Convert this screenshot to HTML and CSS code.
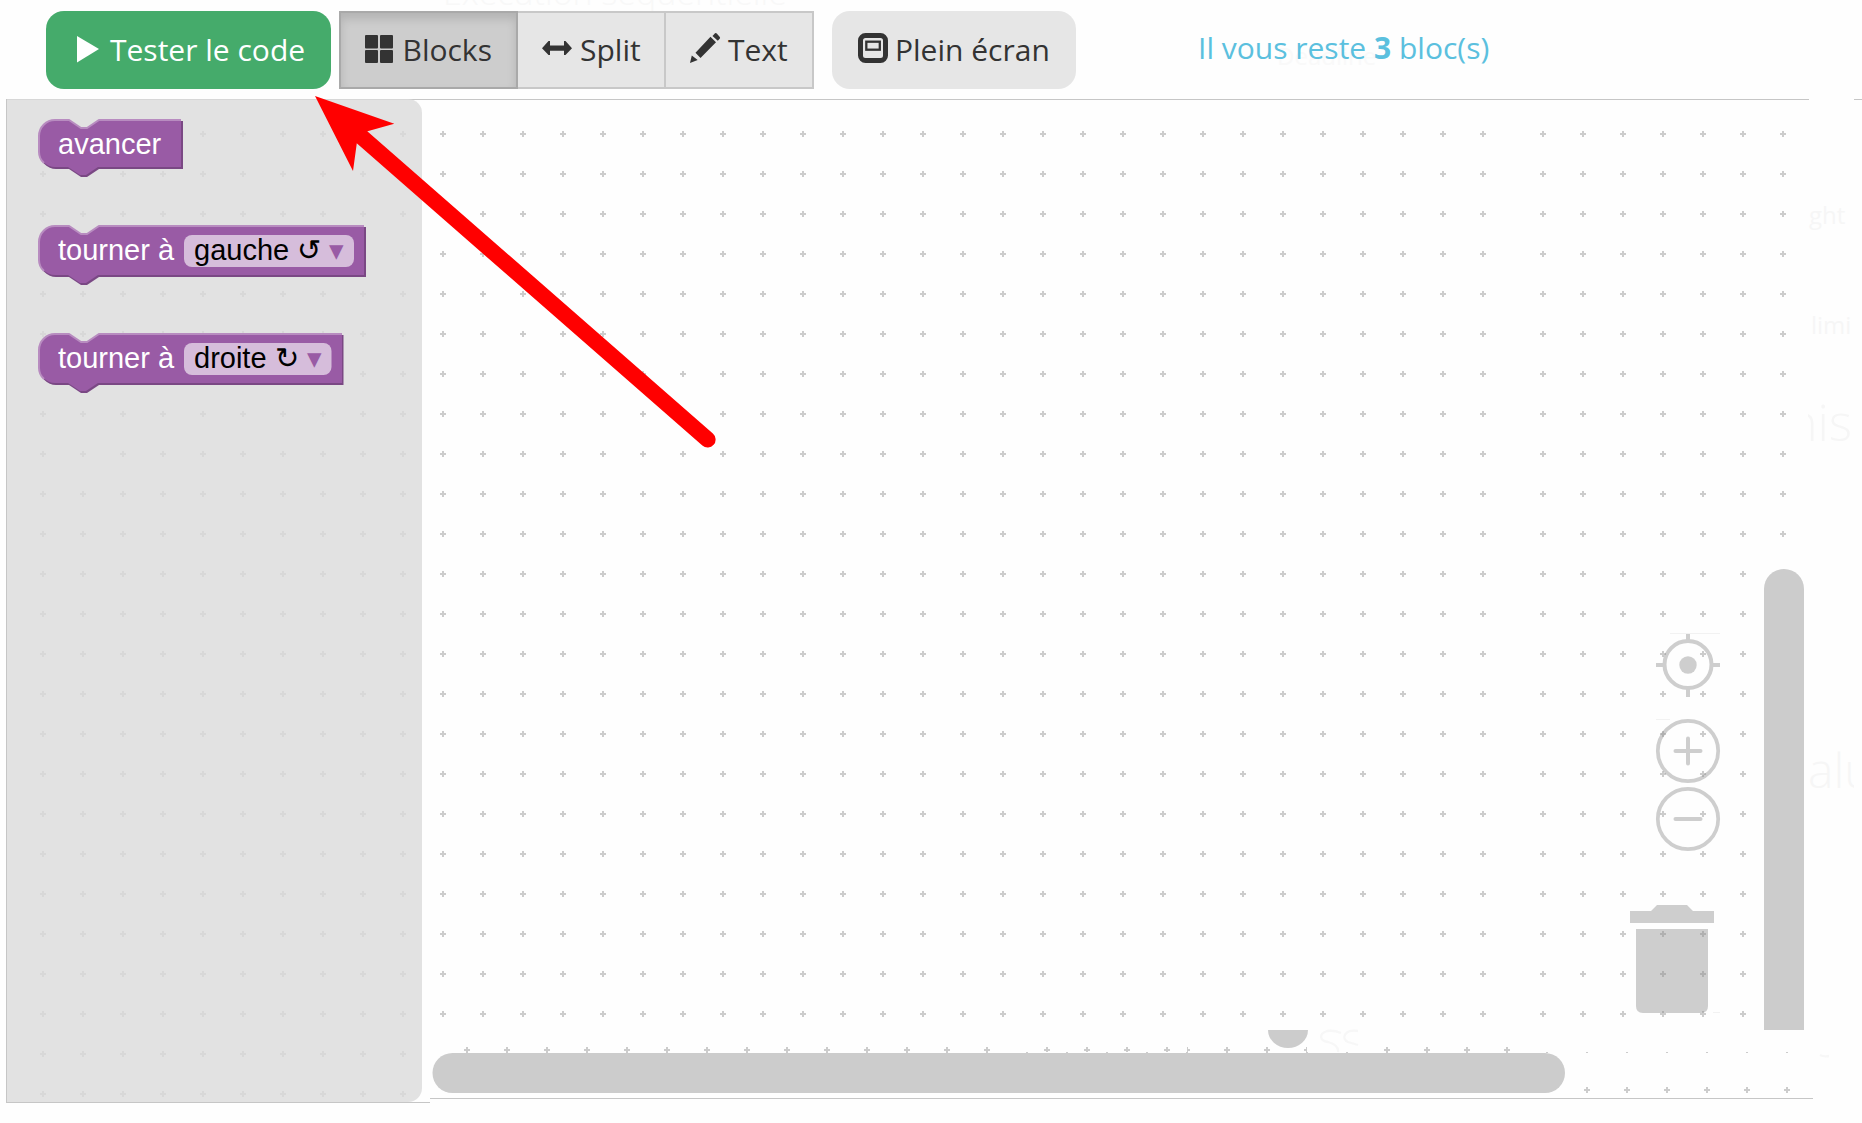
FILE: index.html
```
<!DOCTYPE html>
<html lang="fr">
<head>
<meta charset="utf-8">
<title>Tester le code</title>
<link rel="stylesheet" href="styles.css">
</head>
<body>
<header class="toolbar">
  <span class="ghost ghost-title">Exécution séquentielle</span>
  <span class="ghost ghost-deadline">Deadline</span>
  <button class="btn run"><svg class="ico" width="30" height="30" viewBox="0 0 30 30"><path d="M3 3 25 16 3 29.500Z" fill="#fff"/></svg><span>Tester le code</span></button>
  <div class="modes">
    <button class="mode blocks active"><svg class="ico" width="30" height="30" viewBox="0 0 30 30"><g fill="#333"><rect x="1" y="2" width="13" height="13.400" rx="1"/><rect x="16" y="2" width="13" height="13.400" rx="1"/><rect x="1" y="17" width="13" height="13" rx="1"/><rect x="16" y="17" width="13" height="13" rx="1"/></g></svg><span>Blocks</span></button>
    <button class="mode split"><svg class="ico" width="30" height="30" viewBox="0 0 30 30"><path d="M0 15.300 6.500 8H8V12.500H22V8H23.500L30 15.300 23.500 22H22V17.700H8V22H6.500Z" fill="#333"/></svg><span>Split</span></button>
    <button class="mode text"><svg class="ico" width="30" height="30" viewBox="0 0 30 30"><path d="M0 30 1.800 22.500 7.700 27ZM5.500 19.700 20.500 3.800 26 9.300 10.500 25ZM22.500 3 25 .3Q26 -.3 27 .7L29.800 4Q30.500 5 29.700 5.800L27.800 7.700Z" fill="#333"/></svg><span>Text</span></button>
  </div>
  <button class="btn full"><svg class="ico" width="30" height="30" viewBox="0 0 30 30"><rect x="2.500" y="2.500" width="25" height="25" rx="5" fill="none" stroke="#333" stroke-width="5"/><rect x="8.300" y="8.700" width="13.500" height="8" fill="none" stroke="#333" stroke-width="2.300"/></svg><span>Plein écran</span></button>
  <p class="remaining">Il vous reste <b>3</b> bloc(s)</p>
</header>
<main class="workspace">
<svg class="canvas" width="1862" height="1024" viewBox="0 99 1862 1024">
  <defs>
    <pattern id="grid" x="23" y="114" width="40" height="40" patternUnits="userSpaceOnUse"><path class="cross" d="M17 20H23M20 17V23"/></pattern>
    <pattern id="grid-right" x="1523" y="114" width="40" height="40" patternUnits="userSpaceOnUse"><path class="cross" d="M17 20H23M20 17V23"/></pattern>
    <pattern id="grid-low" x="7" y="1030" width="40" height="40" patternUnits="userSpaceOnUse"><path class="cross" d="M17 20H23M20 17V23"/></pattern>
    <pattern id="ticks" x="7" y="1032" width="40" height="40" patternUnits="userSpaceOnUse"><path d="M19 20H21V21H19Z" fill="#ccc"/></pattern>
    <clipPath id="side"><rect x="1808" y="99" width="46" height="1000"/></clipPath>
  </defs>
  <g class="faint" font-weight="300" clip-path="url(#side)">
    <text x="1809" y="224" font-size="24" font-weight="400">ght</text>
    <text x="1811" y="334" font-size="24" font-weight="400">limi</text>
    <text x="1852" y="441" font-size="50" text-anchor="end">nis</text>
    <text x="1808" y="788" font-size="48">alu</text>
  </g>
  <path d="M1341 1033Q1334 1030 1327 1031C1318 1034 1320 1041 1328 1042Q1339 1045 1338 1052M1358 1031C1344 1029 1341 1039 1348 1042L1358 1045M1820 1055Q1824 1057 1829 1056" fill="none" stroke="#f7f7f7" stroke-width="2.300"/>

  <!-- workspace grid -->
  <rect x="23" y="114" width="1480" height="920" fill="url(#grid)"/>
  <rect x="23" y="1034" width="400" height="68" fill="url(#grid)"/>
  <rect x="1523" y="114" width="280" height="920" fill="url(#grid-right)"/>
  <rect x="447" y="1040" width="560" height="14" fill="url(#grid-low)"/>
  <g transform="translate(20 0)"><rect x="1007" y="1040" width="160" height="12" fill="url(#grid-low)"/></g>
  <rect x="1187" y="1040" width="120" height="12" fill="url(#grid-low)"/>
  <rect x="1367" y="1040" width="160" height="14" fill="url(#grid-low)"/>
  <rect x="1007" y="1050" width="360" height="4" fill="url(#ticks)"/>
  <rect x="1527" y="1050" width="280" height="4" fill="url(#ticks)"/>
  <rect x="1567" y="1080" width="240" height="17" fill="url(#grid-low)"/>

  <!-- frame lines -->
  <path d="M6 99.500H1809M1854 99.500H1862M430 1098.500H1813M6 1102.500H430M6.500 99V1103" stroke="#c6c6c6"/>

  <!-- scrollbars -->
  <path d="M1764 1030V589A20 20 0 0 1 1804 589V1030Z" fill="#ccc"/>
  <rect x="432.500" y="1053" width="1132.500" height="40" rx="20" fill="#ccc"/>
  <path d="M1268 1030H1308A20 18 0 0 1 1268 1030Z" fill="#ccc"/>

  <!-- view controls and trash -->
  <g opacity=".4" fill="none" stroke="#888" stroke-width="4">
    <circle cx="1688" cy="664.500" r="23.500"/><circle cx="1688" cy="665" r="8.700" fill="#888" stroke="none"/>
    <path d="M1688 633V641M1688 688V697M1656 665H1664.500M1711.500 665H1720"/>
    <circle cx="1688" cy="751" r="30.200" stroke-width="3.700"/><path d="M1675.500 751H1700.500M1688 738.500V763.500" stroke-linecap="round"/>
    <circle cx="1688" cy="819" r="30.200" stroke-width="3.700"/><path d="M1675.500 819H1700.500" stroke-linecap="round"/>
    <path d="M1630 911H1651L1657 905H1687L1693 911H1714V923H1630ZM1636 929H1708V1006Q1708 1013 1701 1013H1643Q1636 1013 1636 1006Z" fill="#888" stroke="none"/>
  </g>
  <path d="M1670 633.500H1720M1656 719.500H1670M1713 1012.500H1720" stroke="#f2f2f2"/>

  <!-- toolbox flyout -->
  <path d="M7 99H408A14 14 0 0 1 422 113V1088A14 14 0 0 1 408 1102H7Z" fill="#dbdbdb" fill-opacity=".8"/>
  <g class="block" transform="translate(39 120)">
    <path class="shade" transform="translate(1 1)" d="M0 16A16 16 0 0 1 16 0H30L42 8H48L60 0H143V48H59L47 56H41L29 48H16A16 16 0 0 1 0 32Z"/>
    <path class="face" d="M0 16A16 16 0 0 1 16 0H30L42 8H48L60 0H142V47H59L47 55H41L29 47H16A16 16 0 0 1 0 31Z"/>
    <path class="light" d="M5 43A15 15 0 0 1 0 32V16A16 16 0 0 1 16 0H30L42 8H48L60 0H142"/>
    <text class="label" x="19" y="34">avancer</text>
  </g>
  <g class="block" transform="translate(39 226)">
    <path class="shade" transform="translate(1 1)" d="M0 16A16 16 0 0 1 16 0H30L42 8H48L60 0H326V50H59L47 58H41L29 50H16A16 16 0 0 1 0 34Z"/>
    <path class="face" d="M0 16A16 16 0 0 1 16 0H30L42 8H48L60 0H325V49H59L47 57H41L29 49H16A16 16 0 0 1 0 33Z"/>
    <path class="light" d="M5 45A15 15 0 0 1 0 34V16A16 16 0 0 1 16 0H30L42 8H48L60 0H325"/>
    <text class="label" x="19" y="34">tourner à</text>
    <rect class="field" x="145" y="9" width="170" height="32" rx="8"/>
    <text x="155" y="34">gauche ↺ <tspan class="caret">▾</tspan></text>
  </g>
  <g class="block" transform="translate(39 334)">
    <path class="shade" transform="translate(1 1)" d="M0 16A16 16 0 0 1 16 0H30L42 8H48L60 0H303.500V50H59L47 58H41L29 50H16A16 16 0 0 1 0 34Z"/>
    <path class="face" d="M0 16A16 16 0 0 1 16 0H30L42 8H48L60 0H303V49H59L47 57H41L29 49H16A16 16 0 0 1 0 33Z"/>
    <path class="light" d="M5 45A15 15 0 0 1 0 34V16A16 16 0 0 1 16 0H30L42 8H48L60 0H303"/>
    <text class="label" x="19" y="34">tourner à</text>
    <rect class="field" x="145" y="9" width="147.500" height="32" rx="8"/>
    <text x="155" y="34">droite ↻ <tspan class="caret">▾</tspan></text>
  </g>
</svg>
<svg class="pointer" width="410" height="360" viewBox="310 92 410 360">
  <path d="M360 135.500 707.600 439.600" stroke="red" stroke-width="16" stroke-linecap="round"/>
  <path d="M315 96 394.300 123.700 367.500 131.300 356.800 143.300 353 171Z" fill="red"/>
</svg>
</main>
</body>
</html>
```
FILE: styles.css
```
body { margin: 0; background: #fefefe; font: 30px/40px "Open Sans", sans-serif; overflow: hidden; }
.toolbar { position: relative; display: flex; height: 99px; box-sizing: border-box; padding: 11px 0 10px 46px; color: #333; }
.btn, .mode { position: relative; box-sizing: border-box; font: inherit; color: inherit; height: 78px; padding: 0; display: flex; align-items: center; border: 0; white-space: nowrap; }
.ico { flex: none; margin-bottom: 4px; overflow: visible; }
.run { width: 285px; padding-left: 28px; gap: 6px; background: #45ab6b; color: #fff; border-radius: 18px; }
.modes { display: flex; margin: 0 18px 0 8px; }
.mode { background: #e6e6e6; border: 2px solid #c8c8c8; }
.blocks { width: 179px; padding-left: 22.500px; gap: 9px; }
.active { background: #cdcdcd; border-color: #a9a9a9; box-shadow: inset 0 6px 10px rgba(0, 0, 0, .125); }
.split { width: 149px; padding-left: 24px; gap: 8px; border-left: 0; }
.text { width: 150px; margin-left: -3px; padding-left: 24px; gap: 8px; }
.full { width: 244px; padding-left: 26px; gap: 7px; background: #e6e6e6; border-radius: 18px; }
.remaining { position: relative; margin: 17px 0 0 122px; color: #5bc0de; white-space: nowrap; }
.ghost { position: absolute; color: #f8f8f8; white-space: nowrap; }
.ghost-title { left: 443px; top: -28px; font-size: 34px; font-weight: 300; }
.ghost-deadline { left: 1277px; top: 36px; font-size: 24px; color: #f9f9f9; }
.workspace { position: relative; }
.canvas { display: block; font-family: "Liberation Sans", Arial, sans-serif; font-size: 29px; }
.cross { stroke: #ccc; stroke-width: 2; }
.faint { fill: #f6f6f6; font-family: "Open Sans", sans-serif; }
.shade { fill: #7a4884; }
.face { fill: #995ba5; }
.light { fill: none; stroke: #b88cc0; stroke-width: 2; }
.label { fill: #fff; }
.field { fill: #fff; fill-opacity: .6; }
.caret { fill: #995ba5; }
.pointer { position: absolute; left: 310px; top: -7px; }
```
